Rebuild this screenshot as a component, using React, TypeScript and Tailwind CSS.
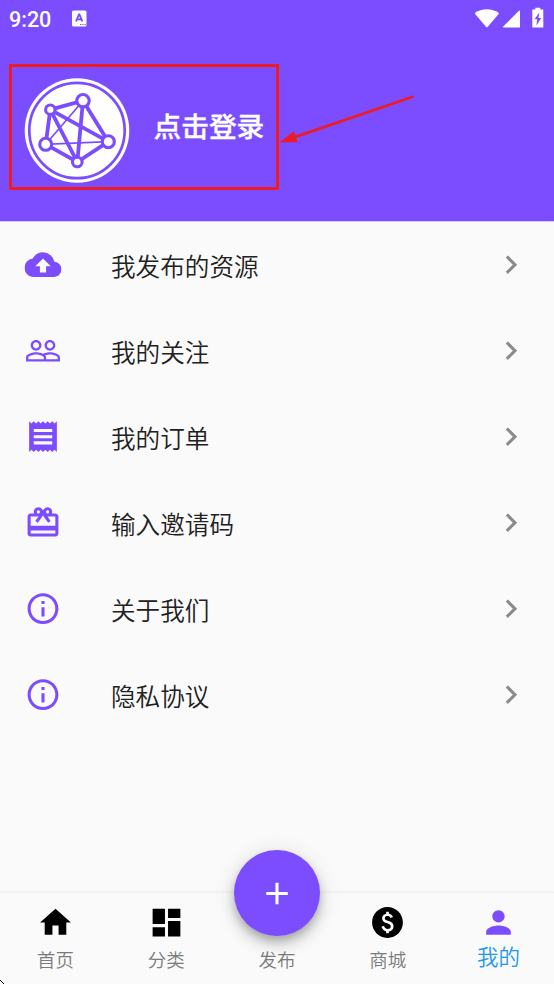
import type { IconType } from 'react-icons';
import {
  MdAdd,
  MdCardGiftcard,
  MdChevronRight,
  MdCloudUpload,
  MdDashboard,
  MdHome,
  MdInfoOutline,
  MdPaid,
  MdPeopleOutline,
  MdPerson,
  MdReceipt,
} from 'react-icons/md';

interface MenuItem {
  label: string;
  icon: IconType;
}

const MENU: MenuItem[] = [
  { label: '我发布的资源', icon: MdCloudUpload },
  { label: '我的关注', icon: MdPeopleOutline },
  { label: '我的订单', icon: MdReceipt },
  { label: '输入邀请码', icon: MdCardGiftcard },
  { label: '关于我们', icon: MdInfoOutline },
  { label: '隐私协议', icon: MdInfoOutline },
];

const TABS: { label: string; icon: IconType | null; active?: boolean }[] = [
  { label: '首页', icon: MdHome },
  { label: '分类', icon: MdDashboard },
  { label: '发布', icon: null },
  { label: '商城', icon: MdPaid },
  { label: '我的', icon: MdPerson, active: true },
];

function StatusBar() {
  return (
    <div className="flex h-10 items-center justify-between pl-[9px] pr-[10px] text-white">
      <div className="flex items-center">
        <span className="w-[63px] font-[Roboto] text-[21.5px] font-medium leading-none">
          9:20
        </span>
        <svg width="15" height="17" viewBox="0 0 15 17" className="mt-[-3px]">
          <rect y="0.5" width="14.5" height="16" rx="1.5" fill="white" />
          <path
            d="M4 11.5 7 4.5h.4l3 7M5.2 9.4h4"
            fill="none"
            stroke="#7c4dff"
            strokeWidth="1.9"
          />
          <path d="M8 14.5h1.4M10.4 14.5h1.2M12.6 14.5h1.2" stroke="#7c4dff" strokeWidth="1.2" />
        </svg>
      </div>
      <svg width="70" height="22" viewBox="474 7 70 22" fill="white" className="mt-[-4px]">
        <path d="M475.2 12.8C481.5 8 492 8 498.5 12.8Q499 13.3 498.6 13.9L487.6 27Q486.9 27.7 486.2 27L475.1 13.9Q474.7 13.3 475.2 12.8Z" />
        <path d="M503.5 27.6Q502.5 27.3 503.2 26.5L519 10.7Q520 10 520 11V27.6Z" />
        <path d="M532.3 9.5h3v-1.8h5v1.8h3v18.1h-11Z" />
        <path d="M539.3 12.5 534.5 19.2h2.7l-.8 6.2 4.8-7.4h-2.7Z" fill="#7c4dff" />
      </svg>
    </div>
  );
}

function Avatar() {
  return (
    <svg width="106" height="106" viewBox="24 77 106 106" className="shrink-0">
      <circle cx="77" cy="130.5" r="52.3" fill="white" />
      <g stroke="#7c4dff" fill="none">
        <circle cx="77" cy="130.5" r="47.7" strokeWidth="2.7" />
        {/* Thin links */}
        <path d="M83 100.7 45.7 144.3 108.3 141.7" strokeWidth="1.7" />
        {/* Thick links */}
        <path
          d="M50.3 109.7 83 100.7 108.3 141.7 77.3 162 45.7 144.3ZM50.3 109.7 108.3 141.7M50.3 109.7 77.3 162 83 100.7"
          strokeWidth="3.8"
        />
        <g fill="white" strokeWidth="3.1">
          <circle cx="50.3" cy="109.7" r="4.7" />
          <circle cx="83" cy="100.7" r="6.2" />
          <circle cx="45.7" cy="144.3" r="6" />
          <circle cx="108.3" cy="141.7" r="6" />
          <circle cx="77.3" cy="162" r="4.8" />
        </g>
      </g>
    </svg>
  );
}

function LoginHint() {
  return (
    <>
      <div className="absolute left-[9px] top-16 h-[126px] w-[270px] border-3 border-[#ed1c24]" />
      <svg
        className="absolute left-[279px] top-[90px]"
        width="140"
        height="60"
        viewBox="279 90 140 60"
      >
        <path d="M413.5 96.5 294 137.4" stroke="#ed1c24" strokeWidth="2.7" />
        <path d="M279.5 142.2 294 131.3 297.5 142.2Z" fill="#ed1c24" />
      </svg>
    </>
  );
}

function MenuRow({ label, icon: Icon }: MenuItem) {
  return (
    <li className="flex h-[86px] items-center pl-6 pr-[25px]">
      <Icon size={37} className="shrink-0 translate-x-[0.5px] translate-y-[0.2px] text-[#7c4dff]" />
      <span className="ml-[50px] mt-[3px] flex-1 text-[24.6px] font-[350] leading-none text-[#212121]">
        {label}
      </span>
      <MdChevronRight
        size={37}
        className="translate-x-[0.5px] translate-y-[0.2px] text-[#8a8a8a]"
      />
    </li>
  );
}

function BottomNav() {
  return (
    <nav className="relative flex h-[92px] shrink-0 border-t border-[#f0f0f0] bg-[#fafafa] shadow-[0_-1px_2px_rgba(0,0,0,0.03)]">
      {TABS.map(({ label, icon: Icon, active }) => (
        <div key={label} className="flex flex-1 flex-col items-center pt-[11px]">
          <div className={active ? 'h-[37px] text-[#7c4dff]' : 'h-[37px] text-black'}>
            {Icon && <Icon size={37} />}
          </div>
          <span
            className={
              active
                ? 'mt-1 text-[21.5px] font-[350] leading-none text-[#2196f3]'
                : 'mt-[9px] text-[18.5px] font-[350] leading-none text-[#7b7b7b]'
            }
          >
            {label}
          </span>
        </div>
      ))}
      <button
        aria-label="发布"
        className="absolute left-[234px] top-[-43px] flex size-[86px] items-center justify-center rounded-full bg-[#7c4dff] text-white shadow-[0_5px_8px_-1px_rgba(0,0,0,0.2),0_9px_15px_rgba(0,0,0,0.14),0_2px_24px_rgba(0,0,0,0.1)]"
      >
        <MdAdd size={37} className="-translate-x-[0.5px]" />
      </button>
      <svg
        className="absolute bottom-0 left-0"
        width="4"
        height="4"
        viewBox="0 0 4 4"
        shapeRendering="crispEdges"
      >
        <path d="M0 0h1v1h1v1h-1v-1h-1zM2 2h1v1h-1zM3 3h1v1h-1z" />
      </svg>
    </nav>
  );
}

export default function App() {
  return (
    <div className="relative flex h-[984px] w-[554px] flex-col overflow-hidden bg-[#fafafa] font-['Noto_Sans_CJK_SC',sans-serif]">
      <header className="h-[222px] shrink-0 border-b border-[#d5c6fb] bg-[#7c4dff]">
        <StatusBar />
        <div className="flex items-center pl-6 pt-[37px]">
          <Avatar />
          <span className="mb-2 ml-[23.5px] text-[27.7px] font-medium leading-none text-white [-webkit-text-stroke:0.35px_white]">
            点击登录
          </span>
        </div>
      </header>

      <ul className="-mt-px flex-1">
        {MENU.map(item => (
          <MenuRow key={item.label} {...item} />
        ))}
      </ul>

      <BottomNav />
      <LoginHint />
    </div>
  );
}
